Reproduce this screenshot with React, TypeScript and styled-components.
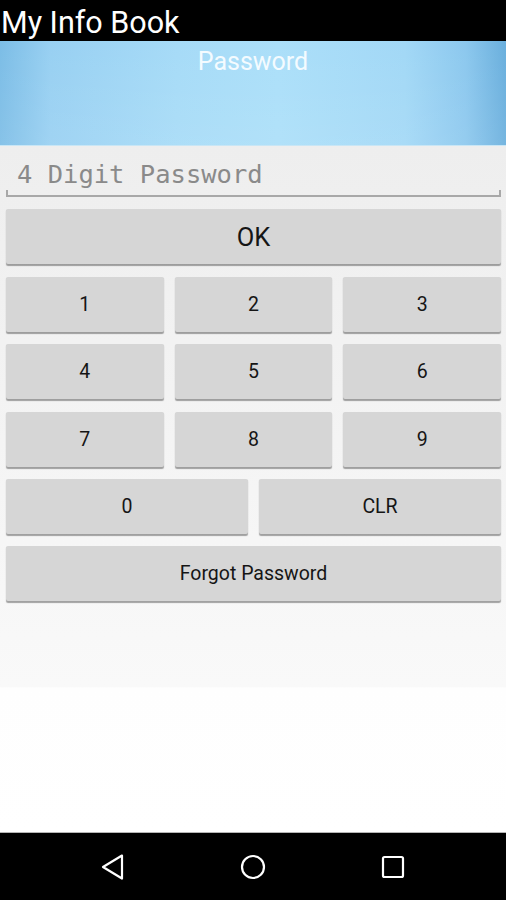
import React from 'react';
import styled, { createGlobalStyle } from 'styled-components';

const GlobalStyle = createGlobalStyle`
  *, *::before, *::after {
    box-sizing: border-box;
  }
  html, body {
    margin: 0;
    padding: 0;
    background: #000;
  }
  body {
    font-family: Roboto, "Liberation Sans", sans-serif;
  }
`;

const Screen = styled.div`
  width: 506px;
  height: 900px;
  display: flex;
  flex-direction: column;
  overflow: hidden;
`;

const TitleBar = styled.div`
  height: 41px;
  background: #000;
  color: #fff;
  font-size: 30.5px;
  line-height: 45px;
  padding-left: 1px;
  white-space: nowrap;
`;

const Banner = styled.div`
  height: 105px;
  background:
    linear-gradient(180deg, rgba(255, 255, 255, 0) 0%, rgba(255, 255, 255, 0.08) 100%),
    linear-gradient(90deg, #7cbde6 0%, #98d0f2 10%, #a6dbf7 35%, #abdff9 55%, #a2d8f6 80%, #8cc8ee 92%, #6aafdd 100%);
  border-bottom: 1px solid #c9e6f5;
  display: flex;
  justify-content: center;
  color: #f4fbff;
  font-size: 25px;
  line-height: 41px;
`;

const Body = styled.div`
  flex: 1;
  background: linear-gradient(180deg, #eeeeee 0%, #f9f9f9 78.8%, #fefefe 79%, #ffffff 100%);
  padding: 0 5px 0 6px;
  display: flex;
  flex-direction: column;
  gap: 12.4px;
`;

const InputField = styled.div`
  height: 48px;
  margin-top: 3px;
  position: relative;
  border-bottom: 2px solid #a8a8a8;
  display: flex;
  align-items: center;
  padding: 4px 0 0 11px;
  font-family: "DejaVu Sans Mono", "Liberation Mono", monospace;
  font-size: 25.5px;
  color: #8a8a8a;

  &::before,
  &::after {
    content: '';
    position: absolute;
    bottom: 0;
    width: 2px;
    height: 5px;
    background: #a8a8a8;
  }
  &::before { left: 0; }
  &::after { right: 0; }
`;

const Button = styled.div<{ $size?: number }>`
  height: 55px;
  background: #d6d6d6;
  border-radius: 2px;
  box-shadow: 0 1.5px 1px rgba(0, 0, 0, 0.35);
  display: flex;
  align-items: center;
  justify-content: center;
  color: #151515;
  font-size: ${({ $size }) => $size ?? 19.5}px;
`;

const KeyGrid = styled.div<{ $cols: number }>`
  display: grid;
  grid-template-columns: repeat(${({ $cols }) => $cols}, 1fr);
  column-gap: 11px;
`;

const NavBar = styled.div`
  height: 68px;
  background: #000;
  border-top: 1px solid #b5b5b5;
  display: flex;
  justify-content: center;
  align-items: center;
`;

const NavSlot = styled.div`
  width: 140px;
  display: flex;
  justify-content: center;
`;

const rows = [
  ['1', '2', '3'],
  ['4', '5', '6'],
  ['7', '8', '9'],
];

export default function App() {
  return (
    <>
      <GlobalStyle />
      <Screen>
        <TitleBar>My Info Book</TitleBar>
        <Banner>Password</Banner>
        <Body>
          <InputField>4 Digit Password</InputField>
          <Button $size={25.5}>OK</Button>
          {rows.map((r) => (
            <KeyGrid $cols={3} key={r[0]}>
              {r.map((k) => (
                <Button key={k}>{k}</Button>
              ))}
            </KeyGrid>
          ))}
          <KeyGrid $cols={2}>
            <Button>0</Button>
            <Button>CLR</Button>
          </KeyGrid>
          <Button>Forgot Password</Button>
        </Body>
        <NavBar>
          <NavSlot>
            <svg width="28" height="28" viewBox="0 0 28 28">
              <path d="M23 2.5 L4 14 L23 25.5 Z" fill="none" stroke="#fff" strokeWidth="2.2" strokeLinejoin="round" />
            </svg>
          </NavSlot>
          <NavSlot>
            <svg width="28" height="28" viewBox="0 0 28 28">
              <circle cx="14" cy="14" r="11" fill="none" stroke="#fff" strokeWidth="2.2" />
            </svg>
          </NavSlot>
          <NavSlot>
            <svg width="28" height="28" viewBox="0 0 28 28">
              <rect x="4" y="4" width="20" height="20" rx="1.5" fill="none" stroke="#fff" strokeWidth="2.2" />
            </svg>
          </NavSlot>
        </NavBar>
      </Screen>
    </>
  );
}
